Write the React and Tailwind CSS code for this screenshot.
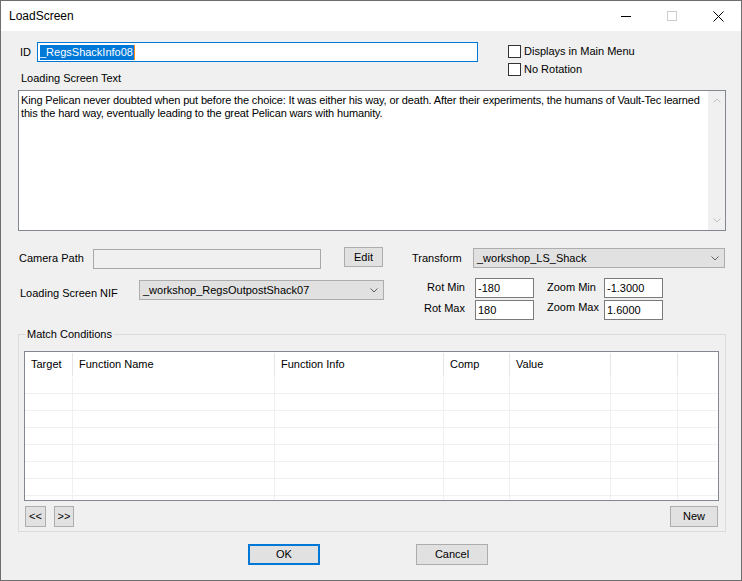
import React from 'react'

const Chevron = ({ up = false, color = '#606060' }) => (
  <svg width="8" height="5" viewBox="0 0 8 5" className="shrink-0">
    <polyline
      points={up ? '0.5,4.5 4,1 7.5,4.5' : '0.5,0.5 4,4 7.5,0.5'}
      fill="none"
      stroke={color}
      strokeWidth="1"
    />
  </svg>
)

const Button = ({ children, className = '' }) => (
  <div className={`flex items-center justify-center bg-[#e1e1e1] border border-[#adadad] ${className}`}>
    {children}
  </div>
)

const Combo = ({ value, className = '' }) => (
  <div className={`flex items-center h-[20px] bg-[#e1e1e1] border border-[#adadad] pl-[3px] pr-[5px] ${className}`}>
    <span className="flex-1 whitespace-nowrap">{value}</span>
    <Chevron />
  </div>
)

const TextBox = ({ value, className = '' }) => (
  <div className={`flex items-center h-[20px] bg-white border border-[#7a7a7a] pl-[2px] ${className}`}>
    {value}
  </div>
)

const CheckBox = ({ label }) => (
  <div className="flex items-center h-[13px]">
    <div className="w-[13px] h-[13px] bg-white border border-[#333333]" />
    <span className="ml-[3px] whitespace-nowrap">{label}</span>
  </div>
)

const columns = [
  { name: 'Target', w: 'w-[48px]' },
  { name: 'Function Name', w: 'w-[202px]' },
  { name: 'Function Info', w: 'w-[169px]' },
  { name: 'Comp', w: 'w-[66px]' },
  { name: 'Value', w: 'w-[101px]' },
  { name: '', w: 'w-[67px]' },
  { name: '', w: 'w-[40px]' }
]

const rows = [0, 1, 2, 3, 4, 5, 6, 7]

const App = () => {
  return (
    <div className="w-[742px] h-[581px] border border-[#6e6e6e] bg-[#f0f0f0] flex flex-col overflow-hidden font-['Liberation_Sans',Arial,sans-serif] text-[11px] leading-[13px] text-black">
      {/* title bar */}
      <div className="h-[30px] bg-white flex items-center shrink-0">
        <span className="pl-[8px] text-[12px]">LoadScreen</span>
        <div className="ml-auto flex h-full">
          <div className="w-[46px] flex items-center justify-center">
            <div className="w-[10px] h-px bg-black" />
          </div>
          <div className="w-[46px] flex items-center justify-center">
            <div className="w-[10px] h-[10px] border border-[#cccccc]" />
          </div>
          <div className="w-[46px] flex items-center justify-center">
            <svg width="11" height="11" viewBox="0 0 11 11">
              <path d="M0.5 0.5 L10.5 10.5 M10.5 0.5 L0.5 10.5" stroke="#000" strokeWidth="1" />
            </svg>
          </div>
        </div>
      </div>

      <div className="flex-1 pl-[17px] flex flex-col">
        {/* ID + checkboxes */}
        <div className="flex mt-[11px]">
          <div className="flex flex-col">
            <div className="flex items-center">
              <span className="ml-[2px] w-[17px]">ID</span>
              <div className="w-[441px] h-[20px] bg-white border border-[#0078d7] flex items-center pl-[2px]">
                <span className="bg-[#0078d7] text-white h-[15px] flex items-center pr-[1px]">_RegsShackInfo08</span>
                <span className="w-px h-[15px] bg-[#ff8c1a]" />
              </div>
            </div>
            <span className="ml-[3px] mt-[10px]">Loading Screen Text</span>
          </div>
          <div className="ml-[30px] mt-[3px] flex flex-col gap-[5px]">
            <CheckBox label="Displays in Main Menu" />
            <CheckBox label="No Rotation" />
          </div>
        </div>

        {/* loading screen text */}
        <div className="mt-[5px] w-[708px] h-[141px] bg-white border border-[#828790] flex">
          <div className="flex-1 pl-[2px] pt-[3px] overflow-hidden tracking-[-0.15px]">
            <div className="whitespace-nowrap">King Pelican never doubted when put before the choice: It was either his way, or death. After their experiments, the humans of Vault-Tec learned</div>
            <div className="whitespace-nowrap">this the hard way, eventually leading to the great Pelican wars with humanity.</div>
          </div>
          <div className="w-[17px] bg-[#f0f0f0] flex flex-col items-center justify-between py-[7px]">
            <Chevron up color="#c0c0c0" />
            <Chevron color="#c0c0c0" />
          </div>
        </div>

        {/* camera / nif / transform */}
        <div className="flex mt-[16px]">
          <div className="flex flex-col w-[366px]">
            <div className="flex items-start h-[22px]">
              <span className="ml-[1px] w-[74px] mt-[5px]">Camera Path</span>
              <div className="w-[228px] h-[20px] mt-[2px] bg-[#f0f0f0] border border-[#a8a8a8]" />
              <Button className="ml-[23px] w-[39px] h-[20px]">Edit</Button>
            </div>
            <div className="flex items-start mt-[11px]">
              <span className="ml-[2px] w-[119px] mt-[7px]">Loading Screen NIF</span>
              <Combo value="_workshop_RegsOutpostShack07" className="w-[245px]" />
            </div>
          </div>
          <div className="flex flex-col ml-[28px]">
            <div className="flex items-start">
              <span className="w-[61px] mt-[5px]">Transform</span>
              <Combo value="_workshop_LS_Shack" className="w-[252px] mt-[1px]" />
            </div>
            <div className="flex items-start mt-[10px]">
              <span className="w-[53px] text-right mt-[3px]">Rot Min</span>
              <TextBox value="-180" className="ml-[10px] w-[59px]" />
              <span className="ml-[13px] w-[57px] mt-[3px]">Zoom Min</span>
              <TextBox value="-1.3000" className="w-[59px]" />
            </div>
            <div className="flex items-start mt-[2px]">
              <span className="w-[53px] text-right mt-[2px]">Rot Max</span>
              <TextBox value="180" className="ml-[10px] w-[59px]" />
              <span className="ml-[13px] w-[57px] mt-px">Zoom Max</span>
              <TextBox value="1.6000" className="w-[59px]" />
            </div>
          </div>
        </div>

        {/* match conditions */}
        <fieldset className="mt-[8px] w-[708px] h-[204px] border border-[#dcdcdc] px-[5px]">
          <legend className="ml-[2px] px-px">Match Conditions</legend>
          <div className="mt-[10px] w-[695px] h-[150px] bg-white border border-[#828790] overflow-hidden">
            <div className="flex h-[25px] items-center">
              {columns.map((c, i) => (
                <div
                  key={i}
                  className={`${c.w} h-[23px] flex items-center pl-[6px] ${i < columns.length - 1 ? 'border-r border-[#e5e5e5]' : ''}`}
                >
                  {c.name}
                </div>
              ))}
            </div>
            {rows.map((r) => (
              <div key={r} className="flex h-[17px] border-b border-[#f0f0f0]">
                {columns.map((c, i) => (
                  <div
                    key={i}
                    className={`${c.w} ${i < columns.length - 1 ? 'border-r border-[#f0f0f0]' : ''}`}
                  />
                ))}
              </div>
            ))}
          </div>
          <div className="flex w-[695px] mt-[5px] pl-px pr-px">
            <Button className="w-[21px] h-[21px]">&lt;&lt;</Button>
            <Button className="ml-[8px] w-[20px] h-[21px]">&gt;&gt;</Button>
            <Button className="ml-auto w-[48px] h-[21px]">New</Button>
          </div>
        </fieldset>

        {/* dialog buttons */}
        <div className="flex mt-[12px]">
          <div className="ml-[230px] w-[72px] h-[21px] flex items-center justify-center bg-[#e1e1e1] border-2 border-[#0078d7]">OK</div>
          <Button className="ml-[96px] w-[72px] h-[21px]">Cancel</Button>
        </div>
      </div>
    </div>
  )
}

export default App
